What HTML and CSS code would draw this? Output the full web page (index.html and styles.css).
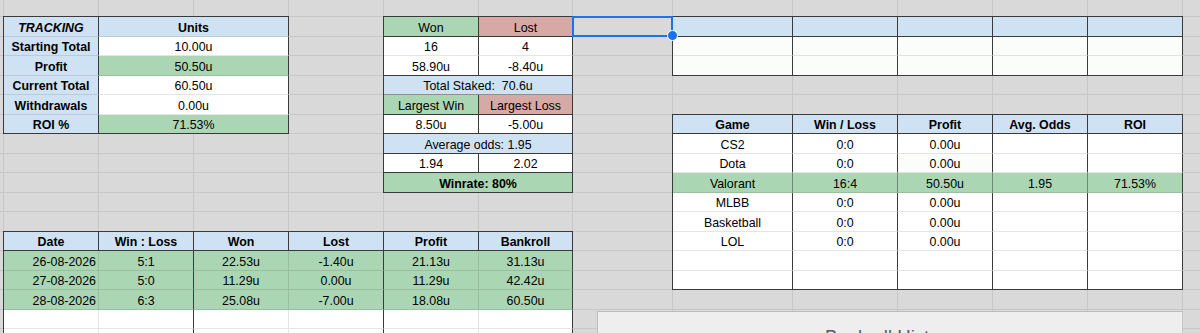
FILE: index.html
```html
<!DOCTYPE html>
<html lang="en">
<head>
<meta charset="utf-8">
<title>Tracking</title>
<link rel="stylesheet" href="styles.css">
</head>
<body>
<div class="sheet">

  <div class="tbl t-track">
    <div class="c blue b i">TRACKING</div><div class="c blue b">Units</div>
    <div class="c blue b">Starting Total</div><div class="c">10.00u</div>
    <div class="c blue b">Profit</div><div class="c green">50.50u</div>
    <div class="c blue b">Current Total</div><div class="c">60.50u</div>
    <div class="c blue b">Withdrawals</div><div class="c">0.00u</div>
    <div class="c blue b bb">ROI %</div><div class="c green bb">71.53%</div>
  </div>

  <div class="tbl t-stats">
    <div class="c green bb">Won</div><div class="c red bb">Lost</div>
    <div class="c">16</div><div class="c">4</div>
    <div class="c bb">58.90u</div><div class="c bb">-8.40u</div>
    <div class="c blue bm span2">Total Staked:  70.6u</div>
    <div class="c green bb">Largest Win</div><div class="c red bb">Largest Loss</div>
    <div class="c bb">8.50u</div><div class="c bb">-5.00u</div>
    <div class="c blue bb span2">Average odds: 1.95</div>
    <div class="c bb">1.94</div><div class="c bb">2.02</div>
    <div class="c green bb b span2">Winrate: 80%</div>
  </div>

  <div class="sel"></div>

  <div class="tbl t-empty">
    <div class="c blue bb"></div><div class="c blue bb"></div><div class="c blue bb"></div><div class="c blue bb"></div><div class="c blue bb"></div>
    <div class="c tint"></div><div class="c tint"></div><div class="c tint"></div><div class="c tint"></div><div class="c tint"></div>
    <div class="c tint bb"></div><div class="c tint bb"></div><div class="c tint bb"></div><div class="c tint bb"></div><div class="c tint bb"></div>
  </div>

  <div class="tbl t-games">
    <div class="c blue b bb">Game</div><div class="c blue b bb">Win / Loss</div><div class="c blue b bb">Profit</div><div class="c blue b bb">Avg. Odds</div><div class="c blue b bb">ROI</div>
    <div class="c">CS2</div><div class="c">0:0</div><div class="c">0.00u</div><div class="c"></div><div class="c"></div>
    <div class="c">Dota</div><div class="c">0:0</div><div class="c tint">0.00u</div><div class="c"></div><div class="c"></div>
    <div class="c green rm">Valorant</div><div class="c green rm">16:4</div><div class="c green rm">50.50u</div><div class="c green rm">1.95</div><div class="c green">71.53%</div>
    <div class="c">MLBB</div><div class="c">0:0</div><div class="c">0.00u</div><div class="c"></div><div class="c"></div>
    <div class="c">Basketball</div><div class="c">0:0</div><div class="c">0.00u</div><div class="c"></div><div class="c"></div>
    <div class="c">LOL</div><div class="c">0:0</div><div class="c">0.00u</div><div class="c"></div><div class="c"></div>
    <div class="c"></div><div class="c"></div><div class="c"></div><div class="c"></div><div class="c"></div>
    <div class="c bb"></div><div class="c bb"></div><div class="c bb"></div><div class="c bb"></div><div class="c bb"></div>
  </div>

  <div class="tbl t-log">
    <div class="c blue b bb">Date</div><div class="c blue b bb">Win : Loss</div><div class="c blue b bb">Won</div><div class="c blue b bb">Lost</div><div class="c blue b bb">Profit</div><div class="c blue b bb">Bankroll</div>
    <div class="c green rl r">26-08-2026</div><div class="c green">5:1</div><div class="c green rl">22.53u</div><div class="c green">-1.40u</div><div class="c green rl">21.13u</div><div class="c green">31.13u</div>
    <div class="c green rl r">27-08-2026</div><div class="c green">5:0</div><div class="c green rl">11.29u</div><div class="c green">0.00u</div><div class="c green rl">11.29u</div><div class="c green">42.42u</div>
    <div class="c green rl r">28-08-2026</div><div class="c green">6:3</div><div class="c green rl">25.08u</div><div class="c green">-7.00u</div><div class="c green rl">18.08u</div><div class="c green">60.50u</div>
    <div class="c rl"></div><div class="c"></div><div class="c rl"></div><div class="c"></div><div class="c rl"></div><div class="c"></div>
    <div class="c rl"></div><div class="c"></div><div class="c rl"></div><div class="c"></div><div class="c rl"></div><div class="c"></div>
  </div>

  <div class="chart">
    <div class="chart-title">Bankroll History</div>
  </div>

</div>
</body>
</html>
```

FILE: styles.css
```css
* {
  box-sizing: border-box;
  margin: 0;
  padding: 0;
}

html, body {
  width: 1200px;
  height: 333px;
  overflow: hidden;
  background: #d9d9d9;
}

body {
  font-family: "Liberation Sans", Arial, sans-serif;
  font-size: 12.4px;
  color: #000;
}

.sheet {
  --dk: #3a3a3a;
  --lt: rgba(0, 0, 0, 0.1);
  --md: #8f8f8f;
  --grid: #c7c7c7;
  display: grid;
  width: 1200px;
  height: 333px;
  overflow: hidden;
  grid-template-columns: 4px 95px 95px 95px 95px 95px 94px 100px 120px 105px 95px 95px 95px 17px;
  grid-template-rows: 17px repeat(8, 20px 19px) 20px;
  background-color: #d9d9d9;
  background-image:
    linear-gradient(to right,
      transparent 3px, var(--grid) 3px 4px,
      transparent 4px 98px, var(--grid) 98px 99px,
      transparent 99px 193px, var(--grid) 193px 194px,
      transparent 194px 288px, var(--grid) 288px 289px,
      transparent 289px 383px, var(--grid) 383px 384px,
      transparent 384px 478px, var(--grid) 478px 479px,
      transparent 479px 572px, var(--grid) 572px 573px,
      transparent 573px 672px, var(--grid) 672px 673px,
      transparent 673px 792px, var(--grid) 792px 793px,
      transparent 793px 897px, var(--grid) 897px 898px,
      transparent 898px 992px, var(--grid) 992px 993px,
      transparent 993px 1087px, var(--grid) 1087px 1088px,
      transparent 1088px 1182px, var(--grid) 1182px 1183px,
      transparent 1183px),
    linear-gradient(to bottom,
      transparent 19px, var(--grid) 19px 20px,
      transparent 20px 38px, var(--grid) 38px 39px);
  background-size: 1200px 100%, 100% 39px;
  background-position: 0 0, 0 17px;
  background-repeat: no-repeat, repeat;
}

/* tables */
.tbl {
  display: grid;
  margin: -1px 0 0 -1px;
  border-top: 1px solid var(--dk);
  border-left: 1px solid var(--dk);
  min-height: 0;
}

.t-track {
  grid-column: 2 / 5;
  grid-row: 2 / 8;
  grid-template-columns: 95px 190px;
  grid-template-rows: 20px 19px 20px 19px 20px 19px;
}

.t-stats {
  grid-column: 6 / 8;
  grid-row: 2 / 11;
  grid-template-columns: 95px 94px;
  grid-template-rows: 20px 19px 20px 19px 20px 19px 20px 19px 20px;
}

.t-empty {
  grid-column: 9 / 14;
  grid-row: 2 / 5;
  grid-template-columns: 120px 105px 95px 95px 95px;
  grid-template-rows: 20px 19px 20px;
}

.t-games {
  grid-column: 9 / 14;
  grid-row: 7 / 16;
  grid-template-columns: 120px 105px 95px 95px 95px;
  grid-template-rows: 19px 20px 19px 20px 19px 20px 19px 20px 19px;
}

.t-log {
  grid-column: 2 / 8;
  grid-row: 13 / 19;
  grid-template-columns: 95px 95px 95px 95px 95px 94px;
  grid-template-rows: 19px 20px 19px 20px 19px 20px;
}

/* cells */
.c {
  display: flex;
  align-items: center;
  justify-content: center;
  min-width: 0;
  overflow: hidden;
  white-space: pre;
  line-height: 14px;
  padding: 2px 2px 0;
  background: #fff;
  border-right: 1px solid var(--dk);
  border-bottom: 1px solid var(--lt);
}

.bb { border-bottom-color: var(--dk); }
.bm { border-bottom-color: var(--md); }
.rl { border-right-color: var(--lt); }
.rm { border-right-color: rgba(0, 0, 0, 0.35); }
.span2 { grid-column: span 2; }
.b { font-weight: bold; }
.i { font-style: italic; }
.r { justify-content: flex-end; }

.blue { background: #cfe2f3; }
.green { background: #aad6b3; }
.red { background: #d7a9a5; }
.tint { background: #fafdfa; }

/* selected cell */
.sel {
  grid-column: 8 / 9;
  grid-row: 2 / 3;
  position: relative;
  z-index: 3;
  margin: -1px 0 0 -1px;
  border: 2px solid #1a73e8;
}

.sel::after {
  content: "";
  position: absolute;
  right: -7px;
  bottom: -6px;
  width: 9px;
  height: 9px;
  border-radius: 50%;
  background: #1a73e8;
  border: 1px solid #fff;
}

/* embedded chart */
.chart {
  grid-column: 8 / 14;
  grid-row: 17 / 19;
  margin: 1px 0 0 24px;
  background: #eeeeee;
  border: 1px solid #bdbdbd;
  border-right-color: #c9c9c9;
  padding-top: 14px;
  z-index: 2;
}

.chart-title {
  text-align: center;
  font-size: 18.6px;
  line-height: 21px;
  color: #595959;
}
```
